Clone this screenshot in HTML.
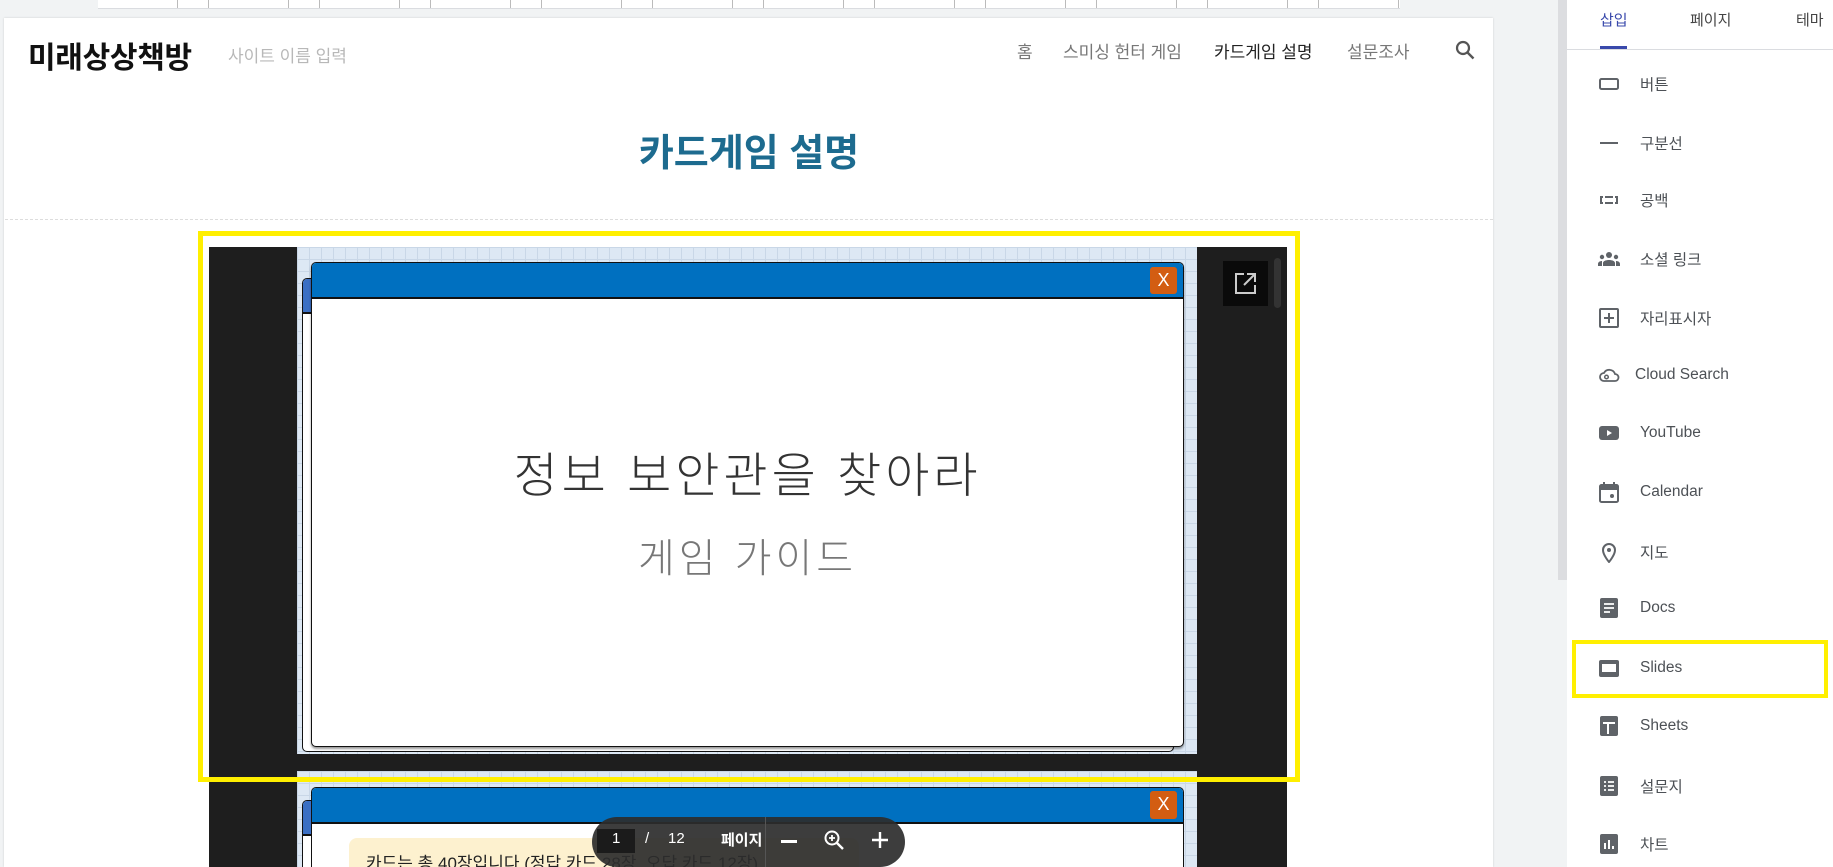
<!DOCTYPE html>
<html style="width:1833px;height:867px;overflow:hidden"><head><meta charset="utf-8">
<style>
*{margin:0;padding:0;box-sizing:border-box}
body{width:1833px;height:867px;overflow:hidden;background:#f1f3f4;font-family:"Liberation Sans","Noto Sans CJK KR",sans-serif;position:relative}
.abs{position:absolute}
.ruler{left:98px;top:0;width:1302px;height:9px;background:#fff;border-bottom:1px solid #dadce0;
background-image:repeating-linear-gradient(90deg,transparent 0 79px,#bbb 79px 80px,transparent 80px 110px,#bbb 110px 111px);}
.page{left:4px;top:18px;width:1489px;height:849px;background:#fff;box-shadow:0 0 2px rgba(0,0,0,.15)}
.nav{top:38px;font-size:17px;color:#777;white-space:nowrap}
.grid{background-color:#dde8f4;background-image:linear-gradient(#c9d7e7 1px,transparent 1px),linear-gradient(90deg,#c9d7e7 1px,transparent 1px);background-size:12px 12px}
.card{border:1.5px solid #111;border-radius:5px;background:#fff;overflow:hidden}
.bar{background:#0070c0;border-bottom:2px solid #111}
.xbtn{background:#d35d12;color:#fff;font-size:18px;text-align:center;border-radius:3px;line-height:27px}
.panel{left:1567px;top:0;width:266px;height:867px;background:#fff}
.item{position:absolute;left:1598px;height:24px;font-size:15.5px;color:#4d5156;display:flex;align-items:center}
.item svg{width:22px;height:22px;margin-right:20px;flex:none}
</style></head><body>
<div class="abs ruler"></div>
<div class="abs page"></div>
<div class="abs" style="left:28px;top:33px;font-size:30px;font-weight:bold;color:#111;letter-spacing:-0.3px">미래상상책방</div>
<div class="abs" style="left:228px;top:42px;font-size:17px;color:#b8b8b8">사이트 이름 입력</div>
<div class="abs nav" style="left:1017px">홈</div>
<div class="abs nav" style="left:1063px">스미싱 헌터 게임</div>
<div class="abs nav" style="left:1214px;color:#222">카드게임 설명</div>
<div class="abs nav" style="left:1347px">설문조사</div>
<svg class="abs" style="left:1453px;top:38px" width="24" height="24" viewBox="0 0 24 24"><circle cx="10" cy="10" r="6" fill="none" stroke="#555" stroke-width="2.2"/><path d="M14.5 14.5l6 6" stroke="#555" stroke-width="2.4"/></svg>
<div class="abs" style="left:5px;width:1488px;top:122px;text-align:center;font-size:38px;font-weight:bold;color:#1d6b8f">카드게임 설명</div>
<div class="abs" style="left:5px;top:219px;width:1488px;border-top:1px dashed #ddd"></div>

<div class="abs" style="left:209px;top:247px;width:1078px;height:620px;background:#1e1e1e"></div>
<div class="abs grid" style="left:297px;top:247px;width:900px;height:507px"></div>
<div class="abs grid" style="left:297px;top:771px;width:900px;height:96px"></div>
<div class="abs card" style="left:302px;top:278px;width:872px;height:474px"><div class="bar" style="height:35px;background:#3a6fc4"></div></div>
<div class="abs card" style="left:311px;top:262px;width:873px;height:485px;box-shadow:0 2px 2px rgba(0,0,0,.4)"><div class="bar" style="height:36px"></div></div>
<div class="abs xbtn" style="left:1150px;top:267px;width:27px;height:27px">X</div>
<div class="abs" style="left:311px;width:873px;top:436px;text-align:center;font-size:48px;color:#333;font-weight:300;letter-spacing:4px">정보 보안관을 찾아라</div>
<div class="abs" style="left:311px;width:873px;top:526px;text-align:center;font-size:40px;color:#777;font-weight:300;letter-spacing:4px">게임 가이드</div>
<div class="abs" style="left:1223px;top:261px;width:45px;height:45px;background:#0a0a0a"></div>
<svg class="abs" style="left:1233px;top:271px" width="25" height="25" viewBox="0 0 25 25"><path d="M11 3H3v19h19v-8" fill="none" stroke="#ccc" stroke-width="2"/><path d="M14 3h8v8M22 3L11 14" fill="none" stroke="#ccc" stroke-width="2"/></svg>
<div class="abs" style="left:1274px;top:258px;width:7px;height:50px;background:#333;border-radius:4px"></div>
<div class="abs card" style="left:302px;top:800px;width:872px;height:80px"><div class="bar" style="height:35px;background:#3a6fc4"></div></div>
<div class="abs card" style="left:311px;top:787px;width:873px;height:90px"><div class="bar" style="height:36px"></div></div>
<div class="abs xbtn" style="left:1150px;top:791px;width:27px;height:28px">X</div>
<div class="abs" style="left:349px;top:838px;width:510px;height:40px;background:#fdf1cf;border-radius:8px"></div>
<div class="abs" style="left:366px;top:849px;font-size:17px;color:#222;white-space:nowrap">카드는 총 40장입니다 (정답 카드 28장, 오답 카드 12장)</div>
<div class="abs" style="left:592px;top:817px;width:313px;height:50px;background:rgba(45,45,45,.92);border-radius:25px"></div>
<div class="abs" style="left:597px;top:829px;width:38px;height:24px;background:#1b1b1b"></div>
<div class="abs" style="left:612px;top:830px;font-size:15px;color:#fff">1</div>
<div class="abs" style="left:645px;top:830px;font-size:15px;color:#fff">/</div>
<div class="abs" style="left:668px;top:830px;font-size:15px;color:#fff">12</div>
<div class="abs" style="left:721px;top:829px;font-size:15px;color:#fff;font-weight:bold">페이지</div>
<div class="abs" style="left:765px;top:817px;width:1px;height:50px;background:#555"></div>
<div class="abs" style="left:781px;top:840px;width:16px;height:2.5px;background:#fff"></div>
<svg class="abs" style="left:822px;top:828px" width="24" height="24" viewBox="0 0 24 24"><circle cx="10" cy="10" r="6.5" fill="none" stroke="#fff" stroke-width="2"/><path d="M15 15l6 6" stroke="#fff" stroke-width="2.4"/><path d="M7 10h6M10 7v6" stroke="#fff" stroke-width="1.8"/></svg>
<svg class="abs" style="left:871px;top:831px" width="18" height="18" viewBox="0 0 18 18"><path d="M9 1v16M1 9h16" stroke="#fff" stroke-width="2.4"/></svg>
<div class="abs" style="left:198px;top:231px;width:1102px;height:551px;border:5px solid #ffef00"></div>

<div class="abs" style="left:1558px;top:0;width:9px;height:580px;background:#dcdde0"></div>
<div class="abs panel"></div>
<div class="abs" style="left:1600px;top:9px;font-size:15px;color:#3949ab">삽입</div>
<div class="abs" style="left:1690px;top:9px;font-size:15px;color:#444">페이지</div>
<div class="abs" style="left:1796px;top:9px;font-size:15px;color:#444">테마</div>
<div class="abs" style="left:1600px;top:46px;width:27px;height:3px;background:#3949ab"></div>
<div class="abs" style="left:1567px;top:49px;width:266px;height:1px;background:#dadce0"></div>

<div class="item" style="top:72px"><svg viewBox="0 0 22 22"><rect x="2" y="6" width="18" height="10" rx="1.5" fill="none" stroke="#5f6368" stroke-width="2"/></svg><span>버튼</span></div>
<div class="item" style="top:131px"><svg viewBox="0 0 22 22"><rect x="2" y="10" width="18" height="2" fill="#5f6368"/></svg><span>구분선</span></div>
<div class="item" style="top:188px"><svg viewBox="0 0 22 22"><path d="M5 8H3v6h2M17 8h2v6h-2M7 8h8M7 14h8" fill="none" stroke="#5f6368" stroke-width="2"/></svg><span>공백</span></div>
<div class="item" style="top:247px"><svg viewBox="0 0 22 22"><circle cx="11" cy="7" r="3" fill="#5f6368"/><circle cx="4" cy="9" r="2.2" fill="#5f6368"/><circle cx="18" cy="9" r="2.2" fill="#5f6368"/><path d="M5 18v-3c0-2 3-3 6-3s6 1 6 3v3zM0 18v-2c0-2 2-3 4-3v5zM22 18v-2c0-2-2-3-4-3v5z" fill="#5f6368"/></svg><span>소셜 링크</span></div>
<div class="item" style="top:306px"><svg viewBox="0 0 22 22"><rect x="2" y="2" width="18" height="18" rx="1" fill="none" stroke="#5f6368" stroke-width="2"/><path d="M11 6v10M6 11h10" stroke="#5f6368" stroke-width="2"/></svg><span>자리표시자</span></div>
<div class="item" style="top:363px"><svg viewBox="0 0 22 22" style="margin-right:15px"><path d="M6 17a4 4 0 0 1 0-8 6 6 0 0 1 11 1 3.5 3.5 0 0 1 0 7z" fill="none" stroke="#5f6368" stroke-width="1.8"/><circle cx="8.5" cy="13" r="1.8" fill="none" stroke="#5f6368" stroke-width="1.5"/></svg><span>Cloud Search</span></div>
<div class="item" style="top:421px"><svg viewBox="0 0 22 22"><rect x="1" y="4" width="20" height="14" rx="3" fill="#5f6368"/><path d="M9 8l5 3-5 3z" fill="#fff"/></svg><span>YouTube</span></div>
<div class="item" style="top:480px"><svg viewBox="0 0 22 22"><rect x="2" y="4" width="18" height="17" rx="1.5" fill="none" stroke="#5f6368" stroke-width="2"/><rect x="2" y="4" width="18" height="5" fill="#5f6368"/><path d="M6 1v4M16 1v4" stroke="#5f6368" stroke-width="2"/><circle cx="14" cy="15" r="2" fill="#5f6368"/></svg><span>Calendar</span></div>
<div class="item" style="top:540px"><svg viewBox="0 0 22 22"><path d="M11 21s-6-7-6-12a6 6 0 0 1 12 0c0 5-6 12-6 12z" fill="none" stroke="#5f6368" stroke-width="2"/><circle cx="11" cy="9" r="2" fill="#5f6368"/></svg><span>지도</span></div>
<div class="item" style="top:596px"><svg viewBox="0 0 22 22"><rect x="2" y="1" width="18" height="20" rx="2" fill="#5f6368"/><path d="M6 7h10M6 11h10M6 15h6" stroke="#fff" stroke-width="1.8"/></svg><span>Docs</span></div>
<div class="item" style="top:656px"><svg viewBox="0 0 22 22"><rect x="1" y="3" width="20" height="17" rx="2" fill="#5f6368"/><rect x="4" y="7" width="14" height="8" fill="#fff"/></svg><span>Slides</span></div>
<div class="item" style="top:714px"><svg viewBox="0 0 22 22"><rect x="2" y="1" width="18" height="20" rx="2" fill="#5f6368"/><path d="M5 8h12M10 8v11" stroke="#fff" stroke-width="2"/></svg><span>Sheets</span></div>
<div class="item" style="top:774px"><svg viewBox="0 0 22 22"><rect x="2" y="1" width="18" height="20" rx="2" fill="#5f6368"/><path d="M6 7h2M10 7h6M6 11h2M10 11h6M6 15h2M10 15h6" stroke="#fff" stroke-width="1.8"/></svg><span>설문지</span></div>
<div class="item" style="top:832px"><svg viewBox="0 0 22 22"><rect x="2" y="1" width="18" height="20" rx="2" fill="#5f6368"/><path d="M7 16v-6M11 16V7M15 16v-3" stroke="#fff" stroke-width="2"/></svg><span>차트</span></div>
<div class="abs" style="left:1572px;top:640px;width:256px;height:58px;border:4px solid #ffef00"></div>
</body></html>
